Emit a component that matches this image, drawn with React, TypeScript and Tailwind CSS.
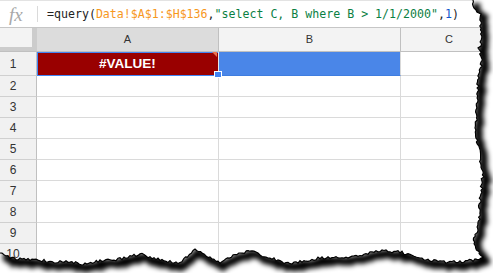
const ROWS = [2, 3, 4, 5, 6, 7, 8, 9, 10];

// 破れた紙の縁。ノットを線形補間して小さなノイズを乗せる（決定的な疑似乱数）。
function seeded(seed: number) {
  let s = seed;
  return () => {
    s = (s * 9301 + 49297) % 233280;
    return s / 233280;
  };
}

function jag(knots: [number, number][], step: number, amp: number, seed: number): [number, number][] {
  const rnd = seeded(seed);
  const out: [number, number][] = [];
  for (let k = 0; k < knots.length - 1; k++) {
    const [a0, b0] = knots[k];
    const [a1, b1] = knots[k + 1];
    const n = Math.max(1, Math.round(Math.abs(a1 - a0) / step));
    for (let i = 0; i < n; i++) {
      const t = i / n;
      out.push([a0 + (a1 - a0) * t, b0 + (b1 - b0) * t + (rnd() - 0.5) * amp * 2]);
    }
  }
  const last = knots[knots.length - 1];
  out.push([last[0], last[1]]);
  return out;
}

// 右端: (y, x)
const RIGHT = jag(
  [
    [0, 473], [8, 474], [14, 480], [40, 482], [48, 479], [60, 482], [80, 478],
    [110, 477], [130, 475], [150, 479], [175, 483], [200, 480], [225, 479],
    [240, 474], [250, 477], [257, 483],
  ],
  2,
  1.3,
  7,
).map(([y, x]) => [x, y] as [number, number]);

// 下端: (x, y) 右から左
const BOTTOM = jag(
  [
    [483, 257], [475, 260], [460, 262], [440, 262], [420, 258], [400, 252],
    [380, 251], [350, 257], [320, 258], [290, 264], [270, 258], [250, 251],
    [235, 255], [220, 263], [210, 258], [195, 250], [180, 263], [160, 260],
    [140, 254], [120, 259], [100, 261], [85, 264], [70, 262], [50, 262],
    [40, 260], [10, 258], [0, 253],
  ],
  2,
  1.4,
  13,
);

const EDGE = [...RIGHT, ...BOTTOM];
const edgeLine = "M " + EDGE.map(([x, y]) => `${x.toFixed(1)},${y.toFixed(1)}`).join(" L ");
const outside = `M 493,-1 L ${EDGE.map(([x, y]) => `${x.toFixed(1)},${y.toFixed(1)}`).join(" L ")} L -1,${BOTTOM[BOTTOM.length - 1][1]} L -1,273 L 493,273 Z`;

function TornEdge() {
  return (
    <svg className="absolute inset-0 pointer-events-none" width={493} height={273} viewBox="0 0 493 273">
      <defs>
        <clipPath id="outside">
          <path d={outside} />
        </clipPath>
        <filter id="blur" x="-10%" y="-10%" width="120%" height="120%">
          <feGaussianBlur stdDeviation="2.4" />
        </filter>
      </defs>
      <path d={outside} fill="#ffffff" />
      <g clipPath="url(#outside)">
        <path
          d={edgeLine}
          fill="none"
          stroke="#000000"
          strokeWidth={8}
          transform="translate(3,3.5)"
          filter="url(#blur)"
        />
      </g>
      <path d={edgeLine} fill="none" stroke="#000000" strokeWidth={1.2} />
    </svg>
  );
}

function Formula() {
  return (
    <div
      className="whitespace-pre text-[11.6px] text-[#222]"
      style={{ fontFamily: '"DejaVu Sans Mono", "Liberation Mono", monospace' }}
    >
      =query(<span className="text-[#f7981d]">Data!$A$1:$H$136</span>,
      <span className="text-[#0b8043]">"select C, B where B &gt; 1/1/2000"</span>,
      <span className="text-[#1155cc]">1</span>)
    </div>
  );
}

export default function App() {
  return (
    <div
      className="relative w-[493px] h-[273px] overflow-hidden bg-white text-[#333]"
      style={{ fontFamily: '"Liberation Sans", Arial, sans-serif' }}
    >
      {/* 数式バー */}
      <div className="flex h-[28px] items-center border-t border-b border-t-[#e3e3e3] border-b-[#c6c6c6] bg-white">
        <div className="flex h-full w-[37px] shrink-0 items-center pl-[9px]">
          <span
            className="text-[19px] italic leading-none text-[#a8a8a8]"
            style={{ fontFamily: '"Liberation Serif", "Times New Roman", serif' }}
          >
            fx
          </span>
        </div>
        <div className="h-[16px] w-px bg-[#dadada]" />
        <div className="pl-[9px] pt-px">
          <Formula />
        </div>
      </div>

      {/* 列ヘッダー */}
      <div className="flex h-[24px] border-b border-[#c0c0c0] bg-[#f3f3f3] text-[11px]">
        <div className="w-[37px] shrink-0 border-r-[5px] border-b-[4px] border-[#cccccc] bg-[#f3f3f3]" />
        <div className="flex w-[182px] shrink-0 items-center justify-center border-r border-[#c0c0c0] bg-[#dcdcdc]">A</div>
        <div className="flex w-[182px] shrink-0 items-center justify-center border-r border-[#c0c0c0]">B</div>
        <div className="flex w-[96px] shrink-0 items-center justify-center">C</div>
      </div>

      {/* 1 行目 */}
      <div className="flex h-[24px] text-[12px]">
        <div className="flex w-[37px] shrink-0 items-center border-r border-b border-r-[#c0c0c0] border-b-[#d0d0d0] bg-[#f1f1f1] pr-[10px] justify-center">
          1
        </div>
        <div className="relative flex w-[182px] shrink-0 items-center justify-center border-r border-b border-r-[#e6e6e6] border-b-[#4285f4] bg-[#990000]">
          <div className="absolute inset-0 border-l border-t border-[#4285f4]" />
          <div className="absolute right-px top-0 h-0 w-0 border-l-[5px] border-t-[5px] border-l-transparent border-t-[#e8704f]" />
          <span className="pt-px text-[13.5px] font-bold text-white">#VALUE!</span>
          <div className="absolute left-[177px] top-[19px] h-[7px] w-[8px] border border-white bg-[#4285f4]" />
        </div>
        <div className="w-[182px] shrink-0 border-r border-b border-r-[#d9d9d9] border-b-[#3f7de0] bg-[#4a86e8]" />
        <div className="w-[96px] shrink-0 border-b border-[#d9d9d9]" />
      </div>

      {ROWS.map((n) => (
        <div key={n} className="flex h-[21px] text-[12px]">
          <div className="flex w-[37px] shrink-0 items-center justify-center border-r border-b border-r-[#c0c0c0] border-b-[#d0d0d0] bg-[#f1f1f1] pr-[10px]">
            {n}
          </div>
          <div className="w-[182px] shrink-0 border-r border-b border-[#dadada]" />
          <div className="w-[182px] shrink-0 border-r border-b border-[#dadada]" />
          <div className="w-[96px] shrink-0 border-b border-[#dadada]" />
        </div>
      ))}

      <TornEdge />
    </div>
  );
}
